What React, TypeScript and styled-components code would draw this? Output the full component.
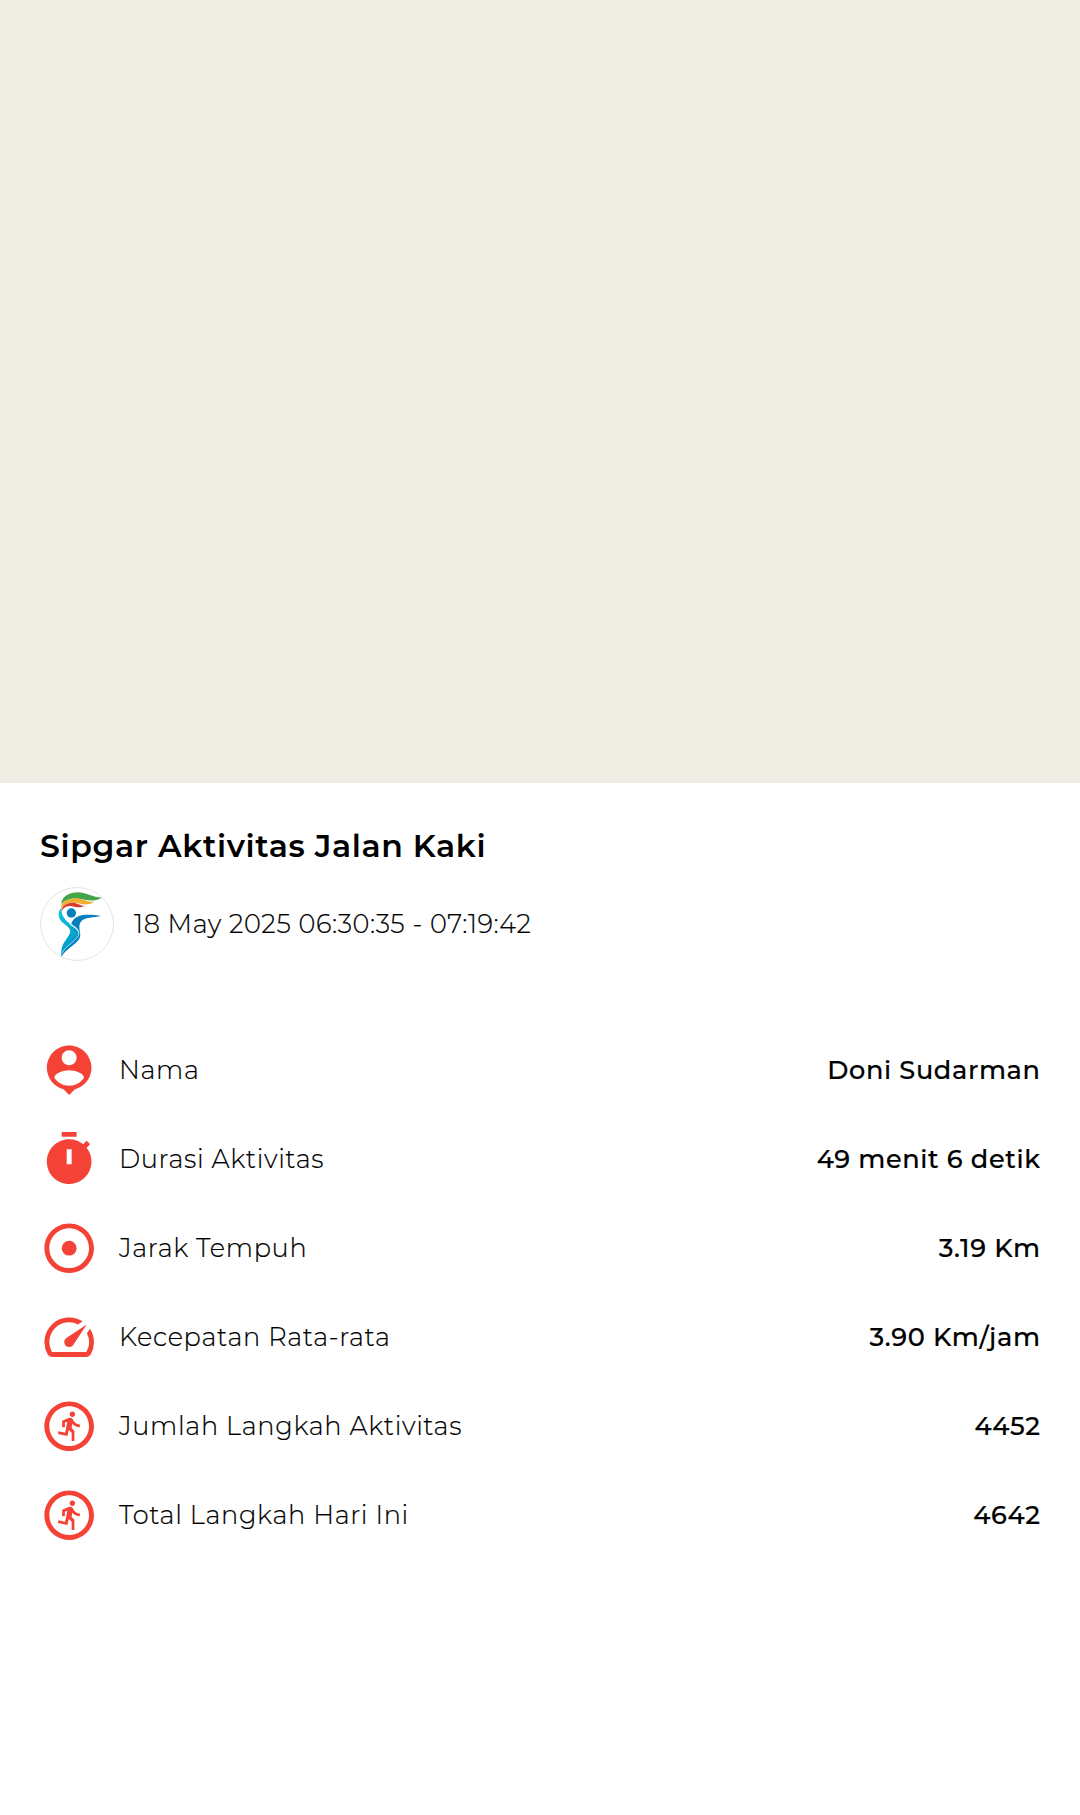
import React from "react";
import styled, { createGlobalStyle } from "styled-components";

const GlobalStyle = createGlobalStyle`
  * { box-sizing: border-box; }
  body { margin: 0; background: #fff; }
`;

const Page = styled.main`
  display: flex;
  flex-direction: column;
  min-height: 1815px;
  background: #fff;
  color: #000;
  font-family: Montserrat, Inter, "Open Sans", sans-serif;
`;

const MapArea = styled.div`
  height: 783px;
  background: #f0ede5;
`;

const Panel = styled.section`
  display: flex;
  flex-direction: column;
  padding: 43px 40px 0;
`;

const Title = styled.h1`
  margin: 0;
  font-size: 31.5px;
  font-weight: 600;
  line-height: 40px;
  letter-spacing: 0.65px;
  white-space: nowrap;
`;

const Session = styled.div`
  display: flex;
  align-items: center;
  gap: 20px;
  margin-top: 21px;
`;

const LogoSvg = styled.svg`
  display: block;
  width: 74px;
  height: 74px;
`;

const SessionTime = styled.time`
  font-size: 25.6px;
  font-weight: 300;
  line-height: 32px;
  letter-spacing: 0.61px;
  -webkit-text-stroke: 0.2px #000;
  white-space: nowrap;
`;

const StatList = styled.ul`
  list-style: none;
  margin: 65px 0 0;
  padding: 0;
`;

const StatRow = styled.li`
  display: flex;
  align-items: center;
  height: 89px;
  padding-bottom: 1px;
`;

const StatIcon = styled.svg`
  flex: none;
  width: 60px;
  height: 60px;
  margin-left: -1px;
  margin-right: 20px;
  fill: #f44336;
`;

const StatLabel = styled.span`
  flex: 1;
  font-size: 25.6px;
  font-weight: 300;
  line-height: 32px;
  letter-spacing: 0.68px;
  -webkit-text-stroke: 0.2px #000;
  white-space: nowrap;
`;

const StatValue = styled.strong`
  margin-right: -0.65px;
  font-size: 25.6px;
  font-weight: 500;
  line-height: 32px;
  letter-spacing: 0.65px;
  -webkit-text-stroke: 0.2px #000;
  white-space: nowrap;
`;

const Logo = () => (
  <LogoSvg viewBox="31 37 222 222">
    <defs>
      <linearGradient id="torso" x1="0" y1="0" x2="0.6" y2="1">
        <stop offset="0" stopColor="#0bc8e0" />
        <stop offset="0.45" stopColor="#06b3d2" />
        <stop offset="1" stopColor="#0a8fc6" />
      </linearGradient>
    </defs>
    <circle cx="142" cy="148" r="109.5" fill="#fff" stroke="#d6d6d6" strokeWidth="2" />
    <path fill="#45a649" d="M94 88C99 63 120 53 145 53C172 54 188 68 217 69C198 80 176 79 157 74C132 68 110 73 94 88Z" />
    <path fill="#f2ae30" d="M93 101C95 80 116 72 140 71C160 73 172 82 193 82C177 92 160 90 146 86C123 81 104 86 93 101Z" />
    <path fill="#de352c" d="M94 111C96 92 112 84 130 84C146 86 151 93 166 93C151 100 140 98 128 95C112 92 102 98 94 111Z" />
    <circle cx="125" cy="115" r="14" fill="#087fbd" />
    <path fill="url(#torso)" d="M95 99C84 110 84 130 97 142C108 151 122 160 122 171C119 184 103 199 97 216C94 227 94 236 96 246C100 227 146 204 148 180C148 160 119 150 107 135C98 123 94 112 95 99Z" />
    <path fill="#087fbd" d="M125 148C129 132 143 124 159 121C180 119 198 121 215 124C190 129 170 128 158 137C149 145 148 154 150 166C150 172 154 180 150 190C143 209 104 225 96 246C95 229 112 219 124 208C141 193 149 187 148 172C145 161 136 156 125 148Z" />
    <path fill="none" stroke="#e3f5fa" strokeWidth="2" d="M119 148C132 158 147 163 148 176C148 195 104 215 98 235" />
  </LogoSvg>
);

const PersonPin = () => (
  <path d="M12 2c-4.970 0-9 4.030-9 9 0 4.170 2.840 7.670 6.690 8.690L12 22l2.310-2.310C18.160 18.670 21 15.170 21 11c0-4.970-4.030-9-9-9zm0 2c1.660 0 3 1.340 3 3s-1.340 3-3 3-3-1.340-3-3 1.340-3 3-3zm0 14.300c-2.500 0-4.710-1.280-6-3.220.030-1.990 4-3.080 6-3.080 1.990 0 5.970 1.090 6 3.080-1.290 1.940-3.500 3.220-6 3.220z" />
);

const Timer = () => (
  <path
    fillRule="evenodd"
    d="M15 1H9v2h6V1zm-4 13h2V8h-2v6zm8.030-6.610 1.420-1.420c-.43-.51-.9-.99-1.410-1.410l-1.420 1.420A8.962 8.962 0 0 0 12 4c-4.970 0-9 4.030-9 9s4.020 9 9 9a8.994 8.994 0 0 0 7.030-14.610z"
  />
);

const Ring = () => (
  <path d="M12 2C6.490 2 2 6.490 2 12s4.490 10 10 10 10-4.490 10-10S17.510 2 12 2zm0 18c-4.410 0-8-3.590-8-8s3.590-8 8-8 8 3.590 8 8-3.590 8-8 8z" />
);

const Target = () => (
  <>
    <Ring />
    <circle cx="12" cy="12" r="3" />
  </>
);

const Speed = () => (
  <path d="m20.380 8.570-1.230 1.850a8 8 0 0 1-.22 7.580H5.070A8 8 0 0 1 15.580 6.850l1.850-1.230A10 10 0 0 0 3.350 19a2 2 0 0 0 1.720 1h13.850a2 2 0 0 0 1.740-1 10 10 0 0 0-.27-10.440zm-9.790 6.840a2 2 0 0 0 2.830 0l5.660-8.490-8.490 5.660a2 2 0 0 0 0 2.830z" />
);

const Runner = () => (
  <>
    <Ring />
    <path
      transform="translate(5.870 5.300) scale(0.55)"
      d="M13.490 5.480c1.100 0 2-.9 2-2s-.9-2-2-2-2 .9-2 2 .9 2 2 2zm-3.600 13.900 1-4.400 2.100 2v6h2v-7.500l-2.100-2 .6-3c1.300 1.500 3.300 2.500 5.500 2.500v-2c-1.900 0-3.500-1-4.300-2.400l-1-1.600c-.4-.6-1-1-1.700-1-.3 0-.5.1-.8.1l-5.200 2.200v4.700h2v-3.400l1.800-.7-1.600 8.100-4.900-1-.4 2 7 1.400z"
    />
  </>
);

interface Stat {
  icon: React.FC;
  label: string;
  value: string;
}

const stats: Stat[] = [
  { icon: PersonPin, label: "Nama", value: "Doni Sudarman" },
  { icon: Timer, label: "Durasi Aktivitas", value: "49 menit 6 detik" },
  { icon: Target, label: "Jarak Tempuh", value: "3.19 Km" },
  { icon: Speed, label: "Kecepatan Rata-rata", value: "3.90 Km/jam" },
  { icon: Runner, label: "Jumlah Langkah Aktivitas", value: "4452" },
  { icon: Runner, label: "Total Langkah Hari Ini", value: "4642" },
];

export default function App() {
  return (
    <Page>
      <GlobalStyle />
      <MapArea />
      <Panel>
        <Title>Sipgar Aktivitas Jalan Kaki</Title>
        <Session>
          <Logo />
          <SessionTime>18 May 2025 06:30:35 - 07:19:42</SessionTime>
        </Session>
        <StatList>
          {stats.map(({ icon: Icon, label, value }) => (
            <StatRow key={label}>
              <StatIcon viewBox="-0.17 -0.17 24.2 24.2">
                <Icon />
              </StatIcon>
              <StatLabel>{label}</StatLabel>
              <StatValue>{value}</StatValue>
            </StatRow>
          ))}
        </StatList>
      </Panel>
    </Page>
  );
}
